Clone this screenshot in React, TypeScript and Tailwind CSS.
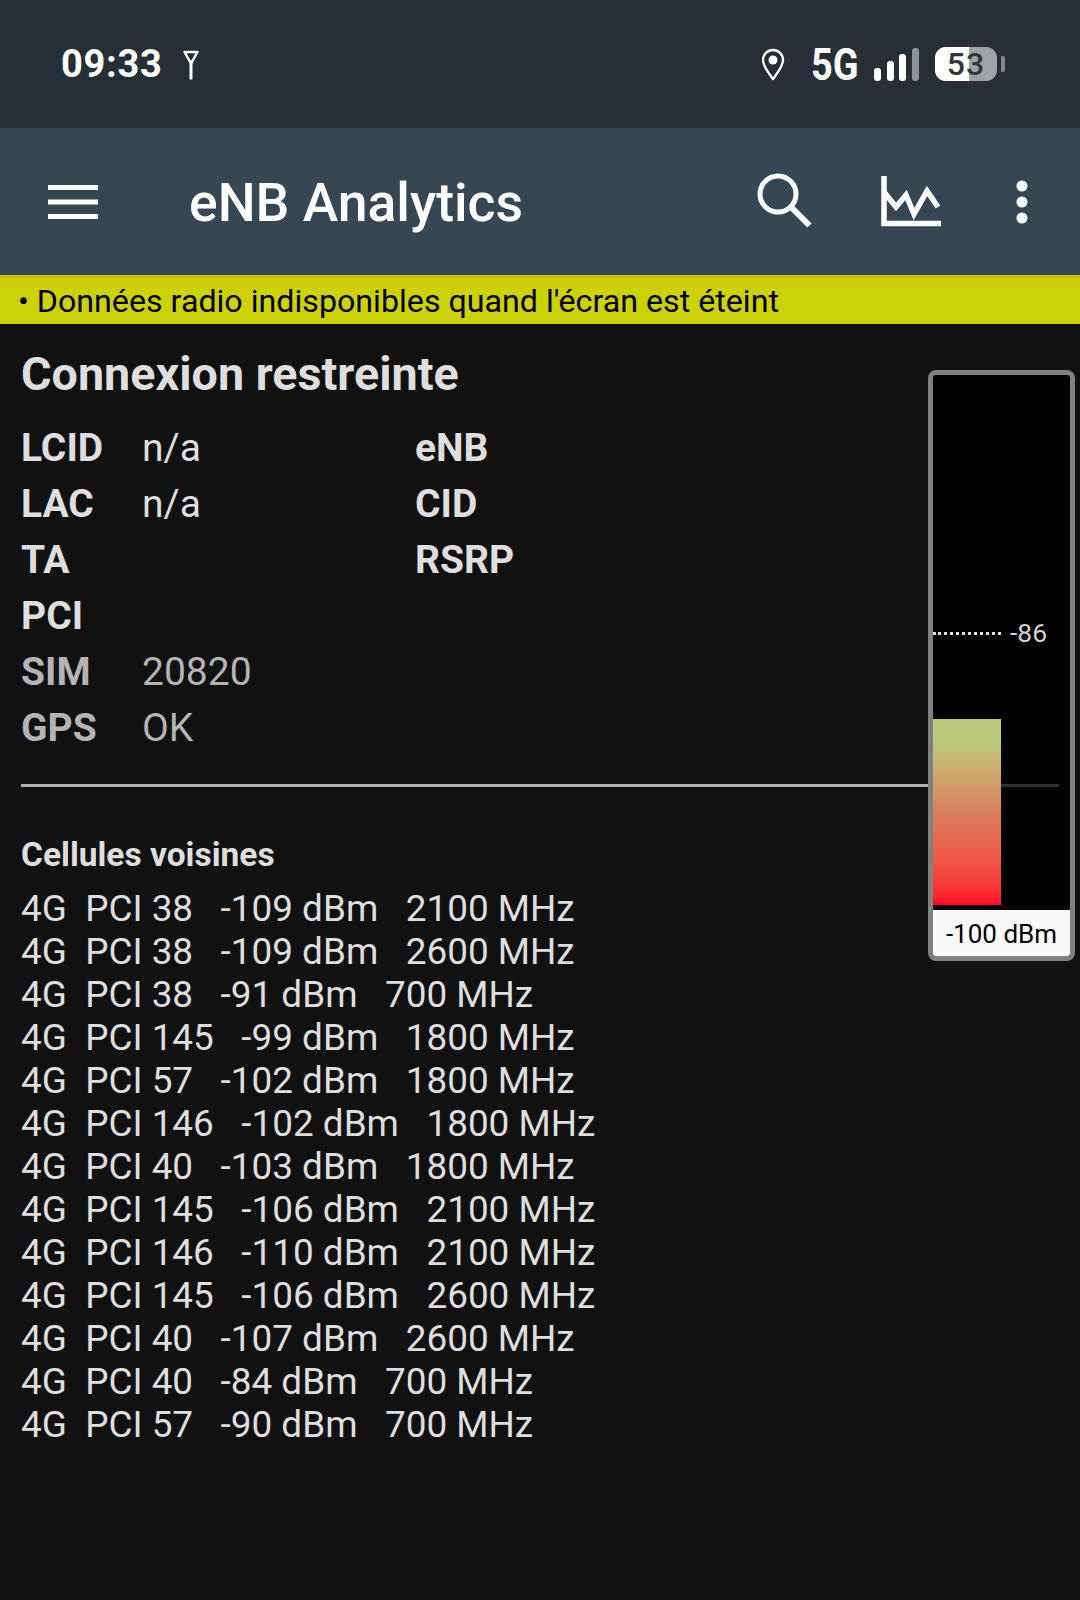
const rows: [string, string, string, boolean][] = [
  ["LCID", "n/a", "eNB", false],
  ["LAC", "n/a", "CID", false],
  ["TA", "", "RSRP", false],
  ["PCI", "", "", false],
  ["SIM", "20820", "", true],
  ["GPS", "OK", "", true],
];

const cells = [
  "4G  PCI 38   -109 dBm   2100 MHz",
  "4G  PCI 38   -109 dBm   2600 MHz",
  "4G  PCI 38   -91 dBm   700 MHz",
  "4G  PCI 145   -99 dBm   1800 MHz",
  "4G  PCI 57   -102 dBm   1800 MHz",
  "4G  PCI 146   -102 dBm   1800 MHz",
  "4G  PCI 40   -103 dBm   1800 MHz",
  "4G  PCI 145   -106 dBm   2100 MHz",
  "4G  PCI 146   -110 dBm   2100 MHz",
  "4G  PCI 145   -106 dBm   2600 MHz",
  "4G  PCI 40   -107 dBm   2600 MHz",
  "4G  PCI 40   -84 dBm   700 MHz",
  "4G  PCI 57   -90 dBm   700 MHz",
];

function StatusBar() {
  return (
    <div className="h-[128px] bg-[#252f35] flex items-start justify-between pl-[61px] pr-[75px] pt-[41px] text-white">
      <div className="flex items-center gap-[21px] h-[46px]">
        <span className="text-[38px] font-bold leading-[46px] tracking-[0.7px]">09:33</span>
        <svg width="16" height="30" viewBox="0 0 16 30" fill="none" stroke="white" className="mt-[1px]">
          <path d="M1.5 2h13L8 13.5z" strokeWidth="2.4" strokeLinejoin="round" />
          <path d="M8 10v19.5" strokeWidth="3" />
        </svg>
      </div>
      <div className="flex items-center h-[46px]">
        <svg width="24" height="33" viewBox="0 0 24 33" fill="none" className="mr-[27px]">
          <path d="M12 31C7 24 2 18.5 2 12a10 10 0 0 1 20 0c0 6.500-5 12-10 19z" stroke="white" strokeWidth="2.3" strokeLinejoin="round" />
          <circle cx="12" cy="12" r="4.500" fill="white" />
        </svg>
        <span className="text-[44px] font-bold leading-[46px] w-[45px] scale-x-[0.86] origin-left whitespace-nowrap mr-[18px] -ml-[1px] mt-[1px]">5G</span>
        <svg width="45" height="33" viewBox="0 0 45 33" className="mr-[16px]">
          <rect x="0" y="20" width="7" height="13" rx="3" fill="white" />
          <rect x="13" y="13" width="7" height="20" rx="3" fill="white" />
          <rect x="25" y="6" width="7" height="27" rx="3" fill="white" />
          <rect x="38" y="0" width="7" height="33" rx="3" fill="#89939a" />
        </svg>
        <div className="relative w-[62px] h-[34px] rounded-[11px] bg-[#9ea3a5] flex items-center justify-center">
          <div className="absolute left-0 top-0 bottom-0 w-[34px] rounded-l-[11px] bg-white" />
          <span className="relative text-[32px] font-medium leading-[32px] tracking-[1px] text-[#333639]">53</span>
        </div>
        <div className="ml-[4px] w-[4px] h-[16px] rounded-r-[2px] bg-[#7d8689]" />
      </div>
    </div>
  );
}

function Toolbar() {
  return (
    <div className="h-[147px] bg-[#364753] flex items-center pl-[48px] text-white relative">
      <svg width="50" height="34" viewBox="0 0 50 34" fill="white" className="mr-[92px]">
        <rect x="0" y="0" width="50" height="5" />
        <rect x="0" y="14.500" width="50" height="5" />
        <rect x="0" y="29" width="50" height="5" />
      </svg>
      <span className="text-[53.500px] font-medium leading-[56px] mt-[3px] -ml-[1px] flex-1 whitespace-nowrap">eNB Analytics</span>
      <svg width="56" height="56" viewBox="0 0 56 56" fill="none" stroke="white" className="mr-[69px] -mt-[1px]">
        <circle cx="22" cy="21" r="18" strokeWidth="5" />
        <path d="M35 34l18.500 18.500" strokeWidth="6" />
      </svg>
      <svg width="60" height="51" viewBox="0 0 60 51" fill="none" stroke="white" className="mr-[75px]">
        <path d="M3 0v47.500h57" strokeWidth="5.500" />
        <path d="M3 16l12 15 10-12 8 19 13-23 11 16" strokeWidth="5.500" />
      </svg>
      <svg width="12" height="44" viewBox="0 0 12 44" fill="white" className="mr-[52px]">
        <circle cx="6" cy="6" r="5.500" />
        <circle cx="6" cy="22" r="5.500" />
        <circle cx="6" cy="38" r="5.500" />
      </svg>
    </div>
  );
}

function Meter() {
  return (
    <div className="absolute left-[928px] top-[370px] w-[147px] h-[591px] border-[5px] border-[#808080] rounded-[8px] bg-black flex flex-col overflow-hidden">
      <div className="relative flex-1">
        <div className="absolute left-0 top-[257px] w-[68px] border-t-[3px] border-dotted border-[#e0e0e0]" />
        <span className="absolute left-[77px] top-[244px] text-[26.500px] leading-[28px] text-[#d0d0d0]">-86</span>
        <div className="absolute left-[68px] top-[409px] w-[58px] h-[3px] bg-[#2e2e2e]" />
        <div className="absolute left-0 top-[344px] w-[68px] h-[186px] bg-linear-to-b from-[#bbc97a] from-[12%] via-[#dc7a5e] via-[52%] to-[#ff0028]" />
      </div>
      <div className="h-[46px] bg-[#fafafa] text-black text-[26px] leading-[48px] text-center whitespace-nowrap">-100 dBm</div>
    </div>
  );
}

export default function App() {
  return (
    <div className="relative w-[1080px] h-[1600px] bg-[#111111] overflow-hidden font-['Roboto',sans-serif]">
      <StatusBar />
      <Toolbar />
      <div className="h-[49px] bg-linear-to-b from-[#c4c40d] to-[#cdd10a] to-[15%] flex items-center pl-[18px] pt-[3px] text-black text-[32.200px] leading-[46px] whitespace-pre">
        • Données radio indisponibles quand l'écran est éteint
      </div>
      <div className="pl-[21px] pt-[22px] text-[#dedede]">
        <h1 className="text-[46.700px] font-bold leading-[56px]">Connexion restreinte</h1>
        <div className="mt-[18px] grid grid-cols-[122px_272px_1fr] w-[600px]">
          {rows.map((r) => (
            <div key={r[0]} className={`contents ${r[3] ? "text-[#b4b4b4]" : ""}`}>
              <span className="text-[39px] font-bold leading-[56px]">{r[0]}</span>
              <span className="text-[39px] leading-[56px] -ml-[1px]">{r[1]}</span>
              <span className="text-[39px] font-bold leading-[56px]">{r[2]}</span>
            </div>
          ))}
        </div>
        <div className="mt-[28px] h-[3px] w-[920px] bg-[#b0b0b0]" />
        <h2 className="mt-[50px] text-[33.500px] font-bold leading-[36px]">Cellules voisines</h2>
        <div className="mt-[14px] text-[36.900px] leading-[43px] whitespace-pre">
          {cells.map((c, i) => (
            <div key={i}>{c}</div>
          ))}
        </div>
      </div>
      <Meter />
    </div>
  );
}
